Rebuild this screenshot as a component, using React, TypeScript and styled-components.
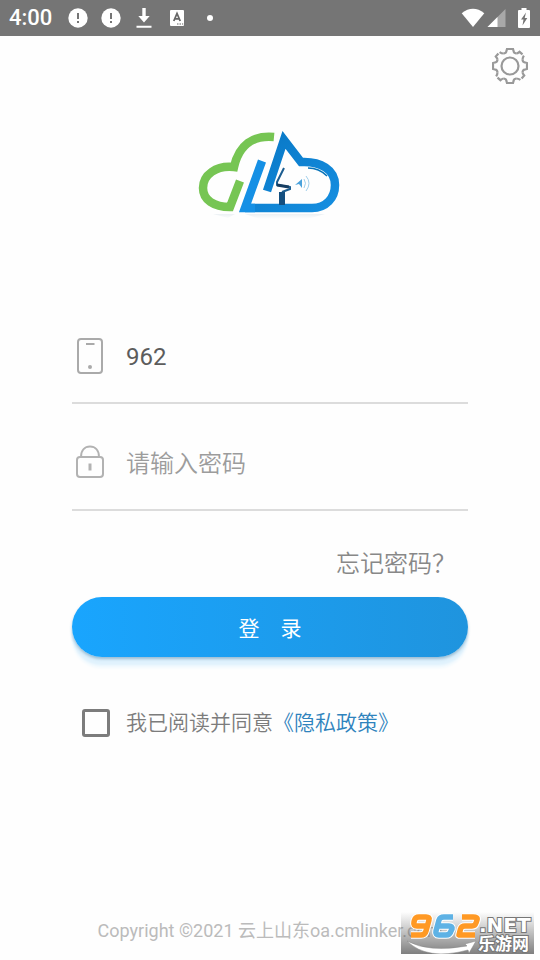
import React, { useState } from "react";
import styled, { createGlobalStyle } from "styled-components";

const GlobalStyle = createGlobalStyle`
  * { box-sizing: border-box; }
  body {
    margin: 0;
    background: #fefefe;
    font-family: Roboto, "Noto Sans CJK SC", sans-serif;
  }
  button, input { font-family: inherit; }
`;

const Screen = styled.div`
  min-height: 100vh;
  display: flex;
  flex-direction: column;
`;

const StatusBar = styled.header`
  height: 36px;
  padding: 0 10px 0 9px;
  display: flex;
  align-items: center;
  justify-content: space-between;
  background: #757575;
  color: #fff;
`;

const StatusGroup = styled.div<{ $gap: number }>`
  display: flex;
  align-items: center;
  gap: ${(p) => p.$gap}px;
`;

const Clock = styled.span`
  width: 46px;
  font-size: 22px;
  line-height: 36px;
  font-weight: 500;
  white-space: nowrap;
`;

const Toolbar = styled.div`
  display: flex;
  justify-content: flex-end;
  padding: 12px;
`;

const IconButton = styled.button`
  display: flex;
  padding: 0;
  border: 0;
  background: none;
  cursor: pointer;
`;

const LogoArea = styled.div`
  display: flex;
  justify-content: center;
  padding: 32px 0 77px;
`;

const Form = styled.form`
  display: flex;
  flex-direction: column;
  margin: 0 72px;
`;

const Field = styled.label`
  display: flex;
  align-items: center;
  gap: 18px;
  height: 107px;
  padding-top: 14px;
  border-bottom: 2px solid #dcdcdc;
`;

const TextInput = styled.input`
  flex: 1;
  min-width: 0;
  height: 48px;
  padding: 0;
  border: 0;
  outline: 0;
  background: transparent;
  color: #5c5c5c;
  font-size: 24px;
  &::placeholder {
    color: #9c9c9c;
    font-weight: 350;
    opacity: 1;
  }
`;

const ForgotLink = styled.a`
  align-self: flex-end;
  margin: 34px 12px 14px 0;
  color: #888;
  font-size: 24px;
  line-height: 38px;
  font-weight: 350;
  text-decoration: none;
`;

const LoginButton = styled.button`
  height: 60px;
  border: 0;
  border-radius: 30px;
  background: linear-gradient(90deg, #19a5fe, #1f94de);
  box-shadow: 0 2px 3px rgba(50, 110, 150, 0.4), 0 8px 2px #e0f2fd, 0 11px 3px #f0f9fe;
  color: #fff;
  font-size: 21px;
  cursor: pointer;
`;

const Agreement = styled.div`
  display: flex;
  align-items: center;
  gap: 16px;
  margin-top: 50px;
  padding-left: 10px;
  font-size: 21px;
  line-height: 32px;
  font-weight: 350;
  color: #7c7c7c;
  white-space: nowrap;
`;

const Checkbox = styled.input`
  appearance: none;
  width: 28px;
  height: 28px;
  margin: 0;
  border: 3px solid #7c7c7c;
  border-radius: 3px;
  &:checked { background: #1e98e6; }
`;

const PolicyLink = styled.a`
  color: #2f83bd;
  text-decoration: none;
`;

const Footer = styled.footer`
  position: relative;
  margin-top: auto;
  padding-bottom: 15px;
  text-align: center;
  color: #bbb;
  font-size: 18px;
  line-height: 28px;
`;

const Watermark = styled.svg`
  position: absolute;
  right: 6px;
  bottom: 6px;
`;

const AlertIcon = () => (
  <svg width="20" height="20" viewBox="0 0 20 20" aria-hidden="true">
    <circle cx="10" cy="10" r="9.700" fill="#fff" />
    <path d="M10 5v6M10 13v2" stroke="#757575" strokeWidth="2" />
  </svg>
);

const DownloadIcon = () => (
  <svg width="20" height="22" viewBox="-2 0 20 22" aria-hidden="true">
    <path d="M6.300 1h3.400v8h4L8 15.400 2.300 9h4zM.5 18.800h15v2H.5z" fill="#fff" />
  </svg>
);

const LetterIcon = () => (
  <svg width="20" height="18" viewBox="-2 0 20 18" aria-hidden="true">
    <rect x="1" y="1" width="14" height="16" rx="1" fill="#fff" />
    <path d="M4.800 12 8 4.500l3.200 7.500M6 9.800h4" fill="none" stroke="#666" strokeWidth="1.800" />
    <path d="M8 15h1.500M10.500 15H12M13 15h1.200" stroke="#666" strokeWidth="1.200" />
  </svg>
);

const DotIcon = () => (
  <svg width="20" height="8" viewBox="0 0 20 8" aria-hidden="true">
    <circle cx="10" cy="4" r="3" fill="#fff" />
  </svg>
);

const WifiIcon = () => (
  <svg width="24" height="20" viewBox="0 0 24 20" aria-hidden="true">
    <path d="M.7 5.300Q12-3.600 23.300 5.300L12 19z" fill="#fff" />
  </svg>
);

const SignalIcon = () => (
  <svg width="19" height="20" viewBox="0 0 19 20" aria-hidden="true">
    <path d="M18.500 1v18H.5z" fill="#a8a8a8" />
    <path d="M10.500 9V19H.5z" fill="#fff" />
  </svg>
);

const BatteryIcon = () => (
  <svg width="12" height="20" viewBox="0 0 12 20" aria-hidden="true">
    <path d="M3.500 0h5v2H11q1 0 1 1v16q0 1-1 1H1q-1 0-1-1V3q0-1 1-1h2.500z" fill="#fff" />
    <path d="M8 4.500 3 11.500h2.500L4.500 17.500 9.300 10H6.700z" fill="#757575" />
  </svg>
);

const GearIcon = () => (
  <svg width="36" height="36" viewBox="-18 -18 36 36" fill="none" stroke="#999" strokeWidth="2.200" aria-hidden="true">
    <circle r="8.500" />
    {[0, 90, 180, 270].map((angle) => (
      <g key={angle} transform={`rotate(${angle})`}>
        <path d="M-6.200-12.500Q-3.800-13-3.700-14.500L-3-17H3L3.700-14.500Q3.800-13 6.200-12.500" />
        <path d="M6.200-12.500Q7.500-12.500 9.500-14.200L12.500-11.600M13.900-10.400Q12.500-8.500 12.500-6.200" />
      </g>
    ))}
  </svg>
);

const PhoneIcon = () => (
  <svg width="36" height="38" viewBox="0 1 36 38" fill="none" stroke="#aaa" strokeWidth="2" aria-hidden="true">
    <rect x="6" y="2" width="24" height="34" rx="3" />
    <path d="M14 7h8.500" />
    <circle cx="18" cy="30" r="2" fill="#aaa" stroke="none" />
  </svg>
);

const LockIcon = () => (
  <svg width="36" height="38" viewBox="0 1 36 38" fill="none" stroke="#b2b2b2" strokeWidth="2" aria-hidden="true">
    <rect x="5" y="13" width="26" height="20" rx="3" />
    <path d="M9 13C9 6 13 2.500 18 2.500S27 6 27 13" />
    <path d="M18 19.500v7" strokeWidth="3" />
  </svg>
);

const CloudLogo = () => (
  <svg width="146" height="92" viewBox="0 0 146 92" fill="none" role="img" aria-label="云上山东">
    <defs>
      <linearGradient id="edge" x1="0" y1="0" x2="1" y2="1">
        <stop stopColor="#0877c5" />
        <stop offset="1" stopColor="#158ee0" />
      </linearGradient>
      <linearGradient id="shade" x1="0" y1="0" x2="0" y2="1">
        <stop stopColor="#d9e3ea" />
        <stop offset="1" stopColor="#fefefe" />
      </linearGradient>
    </defs>
    <path d="M16 86H38L31 90ZM48 86H128L110 91H63Z" fill="url(#shade)" opacity=".5" />
    <path d="M77 9C56 7 42 17 37 39C19 37 6 47 6 60C6 72 17 79 33 79L43 53" stroke="#76c553" strokeWidth="8.500" />
    <path d="M48 80H115C129 80 138 70 138 57C138 42 124 33 104 34L87 12 70 63" stroke="url(#edge)" strokeWidth="8.500" />
    <path d="M65 33 48 80H58" stroke="#1590e5" strokeWidth="8.500" />
    <path d="M111 40Q122 40 130 48" stroke="#0874b9" strokeWidth="1.500" />
    <path d="M87 40 80 54V57L93 59V61L85 64" stroke="#1c5d90" strokeWidth="2" />
    <path d="M80 57 92 59" stroke="#153c60" strokeWidth="3" />
    <path d="M82 64h6v13h-6z" fill="#144f80" />
    <path d="M98 57 105 51V60L102 56Z" fill="#4aa2dc" />
    <path d="M107 51Q110 55 107 60M109 48Q115 55 109 63" stroke="#a1cfeb" />
  </svg>
);

const SiteWatermark = () => (
  <Watermark width="133" height="42" viewBox="0 0 133 42" role="img" aria-label="962.NET 乐游网">
    <defs>
      <linearGradient id="plate" x1="0" y1="0" x2="0" y2="1">
        <stop stopColor="#555" stopOpacity="0" />
        <stop offset="1" stopColor="#555" stopOpacity=".75" />
      </linearGradient>
    </defs>
    <rect width="133" height="42" fill="url(#plate)" />
    <g fill="none" strokeLinejoin="round">
      {[
        { d: "M25 14H16Q12 14 13 10L13.500 8Q14.500 5 18 5H25Q29 5 28 8L25 19Q24 23 20 23H10", color: "#ff9924" },
        { d: "M52 5H43Q39 5 38 8L35 19Q34 23 38 23H45Q49 23 50 19L51 17Q51.500 14 48 14H38", color: "#5eb2e5" },
        { d: "M61 5H72Q77 5 76 8L75 11Q74 14 71 14H64Q60.500 14 59.500 17L58 23H74", color: "#ff9924" },
      ].map((digit) => (
        <g key={digit.d}>
          <path d={digit.d} stroke="#fff" strokeWidth="7.500" />
          <path d={digit.d} stroke={digit.color} strokeWidth="5.500" />
        </g>
      ))}
    </g>
    <path d="M6 29Q28 41 66 34L64 32 75 29 68 41 67 38Q26 49 6 29" fill="#fff" stroke="#888" strokeWidth=".5" />
    <g fill="#fff" stroke="#777" strokeWidth="2" paintOrder="stroke" fontWeight="700">
      <text x="78" y="20" fontFamily="DejaVu Sans, sans-serif" fontSize="20">.NET</text>
      <text x="77" y="38" fontFamily="Noto Sans CJK SC, sans-serif" fontSize="17">乐游网</text>
    </g>
  </Watermark>
);

export default function App() {
  const [account, setAccount] = useState("962");
  const [password, setPassword] = useState("");

  return (
    <Screen lang="zh-CN">
      <GlobalStyle />
      <StatusBar>
        <StatusGroup $gap={13}>
          <Clock>4:00</Clock>
          <AlertIcon />
          <AlertIcon />
          <DownloadIcon />
          <LetterIcon />
          <DotIcon />
        </StatusGroup>
        <StatusGroup $gap={12}>
          <StatusGroup $gap={2}>
            <WifiIcon />
            <SignalIcon />
          </StatusGroup>
          <BatteryIcon />
        </StatusGroup>
      </StatusBar>
      <Toolbar>
        <IconButton type="button" aria-label="设置">
          <GearIcon />
        </IconButton>
      </Toolbar>
      <LogoArea>
        <CloudLogo />
      </LogoArea>
      <Form onSubmit={(e) => e.preventDefault()}>
        <Field>
          <PhoneIcon />
          <TextInput aria-label="手机号" value={account} onChange={(e) => setAccount(e.target.value)} />
        </Field>
        <Field>
          <LockIcon />
          <TextInput
            type="password"
            aria-label="密码"
            placeholder="请输入密码"
            value={password}
            onChange={(e) => setPassword(e.target.value)}
          />
        </Field>
        <ForgotLink href="#forgot">忘记密码？</ForgotLink>
        <LoginButton type="submit">登　录</LoginButton>
        <Agreement>
          <Checkbox type="checkbox" id="agree" />
          <span>
            <label htmlFor="agree">我已阅读并同意</label>
            <PolicyLink href="#privacy">《隐私政策》</PolicyLink>
          </span>
        </Agreement>
      </Form>
      <Footer>
        Copyright ©2021 云上山东oa.cmlinker.com
        <SiteWatermark />
      </Footer>
    </Screen>
  );
}
